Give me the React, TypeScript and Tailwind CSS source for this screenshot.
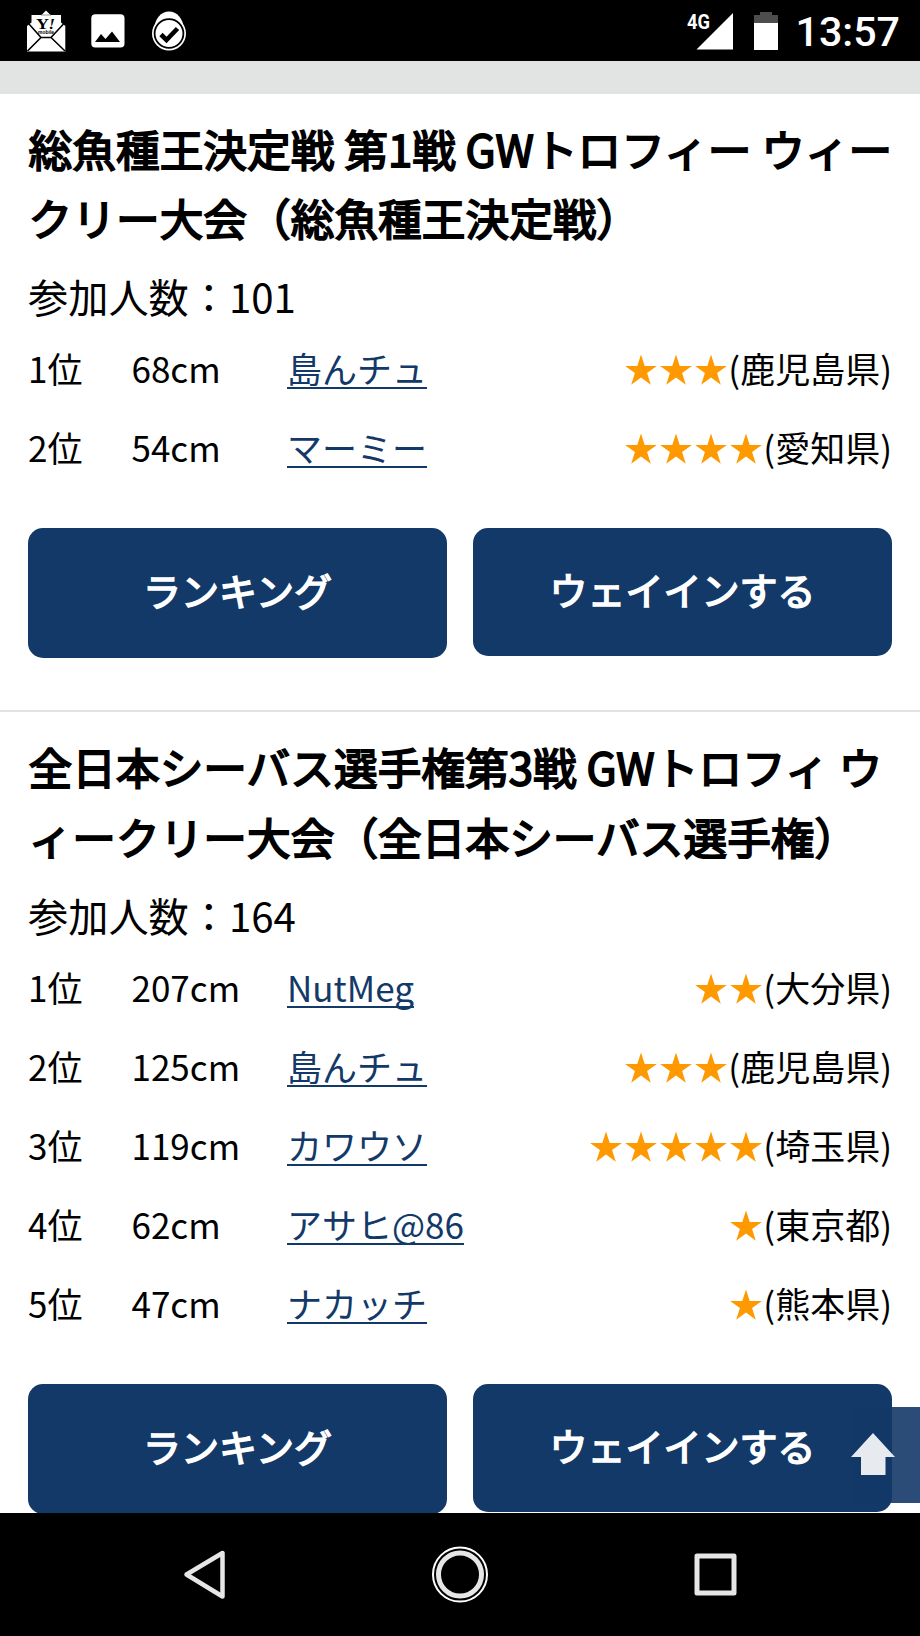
import React from 'react';

interface Entry {
  rank: string;
  size: string;
  name: string;
  stars: number;
  area: string;
}

interface Tournament {
  lines: string[];
  members: number;
  entries: Entry[];
}

const tournaments: Tournament[] = [
  {
    lines: ['総魚種王決定戦 第1戦 GWトロフィー ウィー', 'クリー大会（総魚種王決定戦）'],
    members: 101,
    entries: [
      { rank: '1位', size: '68cm', name: '島んチュ', stars: 3, area: '鹿児島県' },
      { rank: '2位', size: '54cm', name: 'マーミー', stars: 4, area: '愛知県' },
    ],
  },
  {
    lines: ['全日本シーバス選手権第3戦 GWトロフィ ウ', 'ィークリー大会（全日本シーバス選手権）'],
    members: 164,
    entries: [
      { rank: '1位', size: '207cm', name: 'NutMeg', stars: 2, area: '大分県' },
      { rank: '2位', size: '125cm', name: '島んチュ', stars: 3, area: '鹿児島県' },
      { rank: '3位', size: '119cm', name: 'カワウソ', stars: 5, area: '埼玉県' },
      { rank: '4位', size: '62cm', name: 'アサヒ@86', stars: 1, area: '東京都' },
      { rank: '5位', size: '47cm', name: 'ナカッチ', stars: 1, area: '熊本県' },
    ],
  },
];

const Star = () => (
  <svg viewBox="0 0 35 35" className="h-[35px] w-[35px]">
    <path
      d="M18 1.5 L21.7 12.9 L33.9 12.9 L24.1 20.1 L27.8 31.7 L18 24.6 L8.2 31.7 L11.9 20.1 L2.1 12.9 L14.3 12.9 Z"
      fill="#ff9900"
    />
  </svg>
);

const StatusBar = () => (
  <header className="flex h-[61px] shrink-0 items-center bg-black pl-[26px] pr-[20px] text-white">
    {/* Notification icons */}
    <svg viewBox="0 0 40 44" className="h-[44px] w-[40px]">
      <path d="M1 17 L5.5 13.5 V6 H15.5 L20 1.5 L24.5 6 H35 V13.5 L39.3 17 V42.5 H1 Z" fill="#fff" />
      <path d="M3 15 L15 28.5 H25 L37.5 15 M15 28.5 L1.5 42 M25 28.5 L39 42" fill="none" stroke="#000" strokeWidth="1.6" />
      <path d="M15 6 H25" stroke="#777" strokeWidth="0.8" />
      <text x="10" y="19.5" fontSize="15.5" fontWeight="700" fontFamily="Liberation Serif, serif" textLength="13" lengthAdjust="spacingAndGlyphs">Y</text>
      <text x="22.5" y="19.5" fontSize="15.5" fontWeight="700" fontStyle="italic" fontFamily="Liberation Serif, serif" textLength="6.5" lengthAdjust="spacingAndGlyphs">!</text>
      <text x="20" y="25" textAnchor="middle" fontSize="5" fontWeight="700" fontFamily="Liberation Sans, sans-serif">mobile</text>
    </svg>
    <svg viewBox="0 0 34 34" className="ml-[25px] h-[34px] w-[34px]">
      <rect x="0.3" y="0.3" width="33.2" height="33.2" rx="4" fill="#fff" />
      <path d="M4 28 L10 20 L14.5 25 L21 17.5 L29 28 Z" fill="#000" />
    </svg>
    <svg viewBox="0 0 34 42" className="ml-[27px] h-[42px] w-[34px]">
      <ellipse cx="17" cy="18.5" rx="14.5" ry="17" fill="#fff" />
      <circle cx="17" cy="23.5" r="17" fill="#fff" />
      <circle cx="17" cy="23.5" r="14.4" fill="#fff" stroke="#000" strokeWidth="1.8" />
      <path d="M9 24.5 L14.5 30 L25.5 18.5" fill="none" stroke="#000" strokeWidth="4.6" />
    </svg>

    {/* Signal, battery and clock */}
    <svg viewBox="0 0 46 40" className="ml-auto h-[40px] w-[46px]">
      <text x="0" y="17.5" fontSize="21" fontWeight="700" fontFamily="Roboto, sans-serif" fill="#fff" textLength="23" lengthAdjust="spacingAndGlyphs">4G</text>
      <path d="M46 2 V38.5 H9.5 Z" fill="#fff" />
    </svg>
    <svg viewBox="0 0 24 38" className="ml-[21px] h-[38px] w-[24px]">
      <path d="M0 3 H6 V0 H18 V3 H24 V11 H0 Z" fill="#4d4d4d" />
      <path d="M0 11 H24 V38 H0 Z" fill="#fff" />
    </svg>
    <span className="ml-[18px] pt-[3px] font-['Roboto',sans-serif] text-[41.2px] leading-[58px] font-medium">13:57</span>
  </header>
);

const TournamentCard: React.FC<{ item: Tournament }> = ({ item }) => (
  <section className="h-[616.3px] px-[28px] pt-[19.9px]">
    <h2 className="pl-[0.6px] text-[43.7px] leading-[69.5px] font-normal whitespace-nowrap [-webkit-text-stroke:1.8px_#000]">
      {item.lines.map(line => (
        <span key={line} className="block">{line}</span>
      ))}
    </h2>
    <p className="mt-[11.4px] text-[40.2px] leading-[63px]">参加人数：{item.members}</p>

    <ul className="mt-[1.4px] text-[35px]">
      {item.entries.map(entry => (
        <li key={entry.rank} className="flex h-[79.2px] items-center leading-[56px]">
          <span className="w-[103.5px]">{entry.rank}</span>
          <span className="w-[155.5px]">{entry.size}</span>
          <a className="text-[#133968] underline decoration-[2px] underline-offset-[4px] [text-decoration-skip-ink:none]">{entry.name}</a>
          <span className="ml-auto flex items-center">
            <span className="flex pt-[5px]">
              {Array.from({ length: entry.stars }).map((_, i) => (
                <Star key={i} />
              ))}
            </span>
            <span>({entry.area})</span>
          </span>
        </li>
      ))}
    </ul>

    <div className="mt-[41.4px] flex items-start gap-[26px] text-[38px] font-normal text-white [-webkit-text-stroke:1.6px_#fff]">
      <button className="h-[130px] w-[419px] rounded-[15px] bg-[#133968] pb-[7px]">ランキング</button>
      <button className="h-[128px] w-[419px] rounded-[15px] bg-[#133968] pb-[7px]">ウェイインする</button>
    </div>
  </section>
);

const NavBar = () => (
  <nav className="flex h-[123px] shrink-0 items-center justify-center bg-black">
    <svg viewBox="0 0 560 70" className="h-[70px] w-[560px]" fill="none" stroke="#e6e6e6" strokeLinejoin="round">
      <path d="M42.5 13 V56.5 L6.5 34.5 Z" strokeWidth="4.5" />
      <circle cx="280" cy="34.5" r="21.5" strokeWidth="5" />
      <circle cx="280" cy="34.5" r="27" stroke="#fff" strokeWidth="2" />
      <rect x="517" y="16" width="37" height="37" strokeWidth="5" />
    </svg>
  </nav>
);

export default function App() {
  return (
    <div className="flex h-[1636px] w-[920px] flex-col overflow-hidden bg-white font-['Noto_Sans_CJK_JP',sans-serif] text-black">
      <StatusBar />
      <div className="h-[33px] shrink-0 bg-[#e2e4e3]" />
      <main lang="ja" className="relative min-h-0 flex-1 overflow-hidden">
        <TournamentCard item={tournaments[0]} />
        <div className="border-t-2 border-[#e2e2e2]">
          <TournamentCard item={tournaments[1]} />
        </div>

        {/* Back to top */}
        <button className="absolute top-[1313px] right-0 h-[96px] w-[68px] bg-[#133968]/90">
          <svg viewBox="0 0 44 42" className="absolute top-[26px] -left-px h-[42px] w-[44px]">
            <path d="M22 0 L44 24 H34.5 V42 H10 V24 H0 Z" fill="#e7eaef" />
          </svg>
        </button>
      </main>
      <NavBar />
    </div>
  );
}
